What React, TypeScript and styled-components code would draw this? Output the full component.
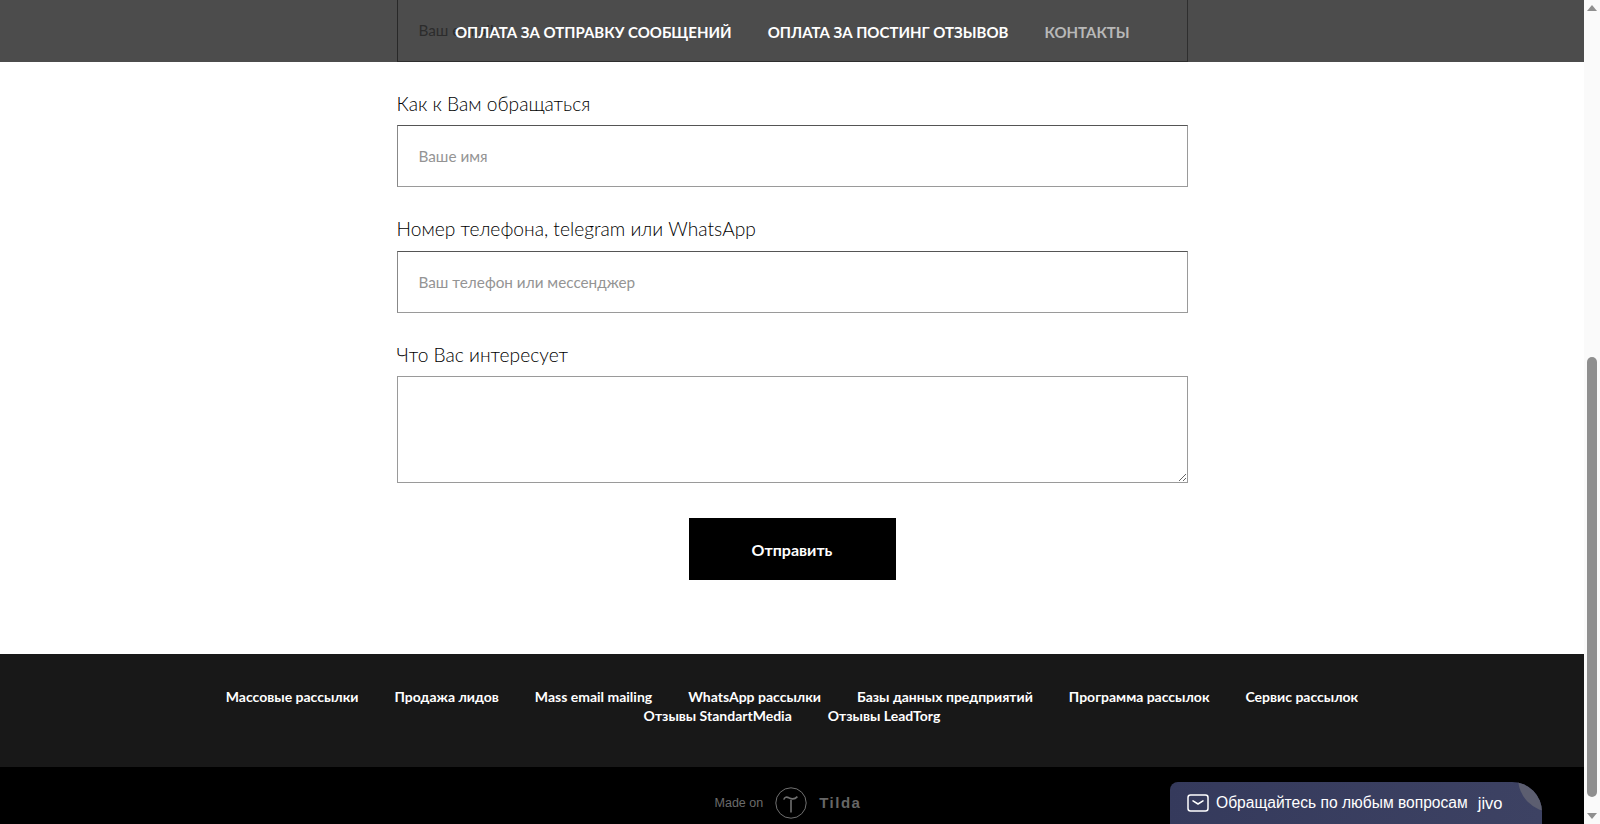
import React from 'react'
import styled, { createGlobalStyle } from 'styled-components'

const GlobalStyle = createGlobalStyle`
  html, body {
    margin: 0;
    padding: 0;
    height: 100%;
    overflow: hidden;
    background: #fff;
  }
`

const footerLinks = [
  'Массовые рассылки',
  'Продажа лидов',
  'Mass email mailing',
  'WhatsApp рассылки',
  'Базы данных предприятий',
  'Программа рассылок',
  'Сервис рассылок',
  'Отзывы StandartMedia',
  'Отзывы LeadTorg',
]

const TildaLogo = () => (
  <svg width="32" height="32" viewBox="0 0 32 32" fill="none" stroke="#707070">
    <circle cx="16" cy="16" r="15.2" strokeWidth="1" />
    <path d="M16 13V25.5" strokeWidth="1.6" />
    <path d="M8.8 12.6C9.6 9.8 11.8 9.6 13.8 10.8C16 12 19.6 12.6 22.4 9.6" strokeWidth="1.6" />
  </svg>
)

const MailIcon = () => (
  <svg width="22" height="18" viewBox="0 0 22 18" fill="none" stroke="#fff" strokeWidth="1.5">
    <rect x="1" y="1" width="20" height="16" rx="2.5" />
    <path d="M6 6.8L11 10L16 6.8" strokeLinecap="round" strokeLinejoin="round" />
  </svg>
)

export default function App() {
  return (
    <>
      <GlobalStyle />
      <Shell>
        <Page>
          <TopNav>
            <NavLink>Оплата за отправку сообщений</NavLink>
            <NavLink>Оплата за постинг отзывов</NavLink>
            <NavLink $muted>Контакты</NavLink>
          </TopNav>

          <Form>
            <Field>
              <Input $scrolledOff placeholder="Ваш e-mail" readOnly />
            </Field>
            <Field>
              <Label>Как к Вам обращаться</Label>
              <Input placeholder="Ваше имя" readOnly />
            </Field>
            <Field>
              <Label>Номер телефона, telegram или WhatsApp</Label>
              <Input placeholder="Ваш телефон или мессенджер" readOnly />
            </Field>
            <Field>
              <Label>Что Вас интересует</Label>
              <TextArea readOnly />
            </Field>
            <SubmitButton type="button">Отправить</SubmitButton>
          </Form>

          <LinksFooter>
            <LinksRow>
              {footerLinks.map((link) => (
                <FooterLink key={link}>{link}</FooterLink>
              ))}
            </LinksRow>
          </LinksFooter>

          <MadeOn>
            <MadeOnText>Made on</MadeOnText>
            <TildaLogo />
            <TildaName>Tilda</TildaName>
          </MadeOn>

          <ChatWidget>
            <MailIcon />
            <ChatText>Обращайтесь по любым вопросам</ChatText>
            <ChatBrand>jivo</ChatBrand>
            <ChatCorner />
          </ChatWidget>
        </Page>

        <ScrollTrack>
          <ScrollArrow $dir="up" />
          <ScrollArea>
            <ScrollThumb />
          </ScrollArea>
          <ScrollArrow $dir="down" />
        </ScrollTrack>
      </Shell>
    </>
  )
}

const Shell = styled.div`
  display: flex;
  width: 1600px;
  height: 824px;
  overflow: hidden;
`

const Page = styled.main`
  position: relative;
  flex: 1;
  height: 824px;
  overflow: hidden;
  display: flex;
  flex-direction: column;
  background: #fff;
`

const TopNav = styled.nav`
  position: absolute;
  top: 0;
  left: 0;
  right: 0;
  height: 62px;
  padding: 2px 0 0 455px;
  box-sizing: border-box;
  display: flex;
  align-items: center;
  gap: 36px;
  background: rgba(0, 0, 0, 0.7);
  z-index: 2;
`

const NavLink = styled.a<{ $muted?: boolean }>`
  font-family: 'Lato', 'Noto Sans', sans-serif;
  font-size: 15px;
  font-weight: 700;
  text-transform: uppercase;
  color: ${(p) => (p.$muted ? '#b8b8b8' : '#fff')};
`

const Form = styled.form`
  width: 791px;
  margin: -0.5px auto 0;
  height: 654.5px;
  flex-shrink: 0;
  display: flex;
  flex-direction: column;
  gap: 27px;
`

const Field = styled.div`
  display: flex;
  flex-direction: column;
  gap: 7px;
`

const Label = styled.label`
  padding-top: 1px;
  font-family: 'Lato', 'Noto Sans', sans-serif;
  font-size: 19.2px;
  font-weight: 300;
  line-height: 28.5px;
  color: #000;
`

const Input = styled.input<{ $scrolledOff?: boolean }>`
  height: 62px;
  box-sizing: border-box;
  padding: 0 21px;
  border: 1px solid #000;
  border-color: #555 #9a9a9a #9a9a9a #888;
  ${(p) => p.$scrolledOff && 'border-top: 0;'}
  outline: none;
  background: #fff;
  font-family: 'Lato', 'Noto Sans', sans-serif;
  font-size: 15.3px;
  font-weight: 400;

  &::placeholder {
    color: #949494;
    opacity: 1;
  }
`

const TextArea = styled.textarea`
  height: 107px;
  box-sizing: border-box;
  padding: 15px 21px;
  border: 1px solid #9a9a9a;
  outline: none;
  background: #fff;
`

const SubmitButton = styled.button`
  align-self: center;
  width: 207px;
  height: 62px;
  margin-top: 8px;
  border: 0;
  background: #000;
  color: #fff;
  font-family: 'Lato', 'Noto Sans', sans-serif;
  font-size: 16px;
  font-weight: 700;
`

const LinksFooter = styled.div`
  height: 113px;
  box-sizing: border-box;
  padding-top: 33px;
  background: #181818;
`

const LinksRow = styled.div`
  width: 1200px;
  margin: 0 auto;
  display: flex;
  flex-wrap: wrap;
  justify-content: center;
  column-gap: 36px;
`

const FooterLink = styled.a`
  font-family: 'Lato', 'Noto Sans', sans-serif;
  font-size: 14px;
  font-weight: 700;
  line-height: 19px;
  color: #fff;
`

const MadeOn = styled.div`
  flex: 1;
  background: #000;
  display: flex;
  align-items: center;
  justify-content: center;
  padding: 14px 8px 0 0;
  gap: 12px;
`

const MadeOnText = styled.span`
  font-family: 'Liberation Sans', Arial, sans-serif;
  font-size: 12.5px;
  color: #6b6b6b;
`

const TildaName = styled.span`
  font-family: 'Liberation Sans', Arial, sans-serif;
  font-size: 15px;
  font-weight: 700;
  letter-spacing: 1.5px;
  color: #666;
`

const ChatWidget = styled.div`
  position: absolute;
  left: 1170px;
  bottom: 0;
  width: 372px;
  height: 42px;
  box-sizing: border-box;
  padding-left: 17px;
  display: flex;
  align-items: center;
  gap: 7px;
  overflow: hidden;
  border-radius: 8px 30px 0 0;
  background: linear-gradient(95deg, #353a5c 0%, #3d4263 100%);
  z-index: 3;
`

const ChatText = styled.span`
  font-family: 'Liberation Sans', Arial, sans-serif;
  font-size: 15.6px;
  color: #fff;
`

const ChatBrand = styled.span`
  font-family: 'Liberation Sans', Arial, sans-serif;
  font-size: 16.5px;
  margin-left: 3px;
  color: #fff;
`

const ChatCorner = styled.span`
  position: absolute;
  top: -38px;
  right: -44px;
  width: 68px;
  height: 68px;
  border-radius: 50%;
  background: #5c5e70;
`

const ScrollTrack = styled.aside`
  width: 16px;
  height: 824px;
  display: flex;
  flex-direction: column;
  background: #fafafa;
`

const ScrollArea = styled.div`
  flex: 1;
  display: flex;
  flex-direction: column;
  justify-content: flex-end;
  padding: 0 3px 11px;
`

const ScrollThumb = styled.div`
  height: 440px;
  border-radius: 5px;
  background: #8f8f8f;
`

const ScrollArrow = styled.div<{ $dir: 'up' | 'down' }>`
  height: 16px;
  display: flex;
  align-items: center;
  justify-content: center;

  &::before {
    content: '';
    border-left: 5px solid transparent;
    border-right: 5px solid transparent;
    ${(p) => (p.$dir === 'up' ? 'border-bottom: 6px solid #8f8f8f;' : 'border-top: 6px solid #8f8f8f;')}
  }
`
